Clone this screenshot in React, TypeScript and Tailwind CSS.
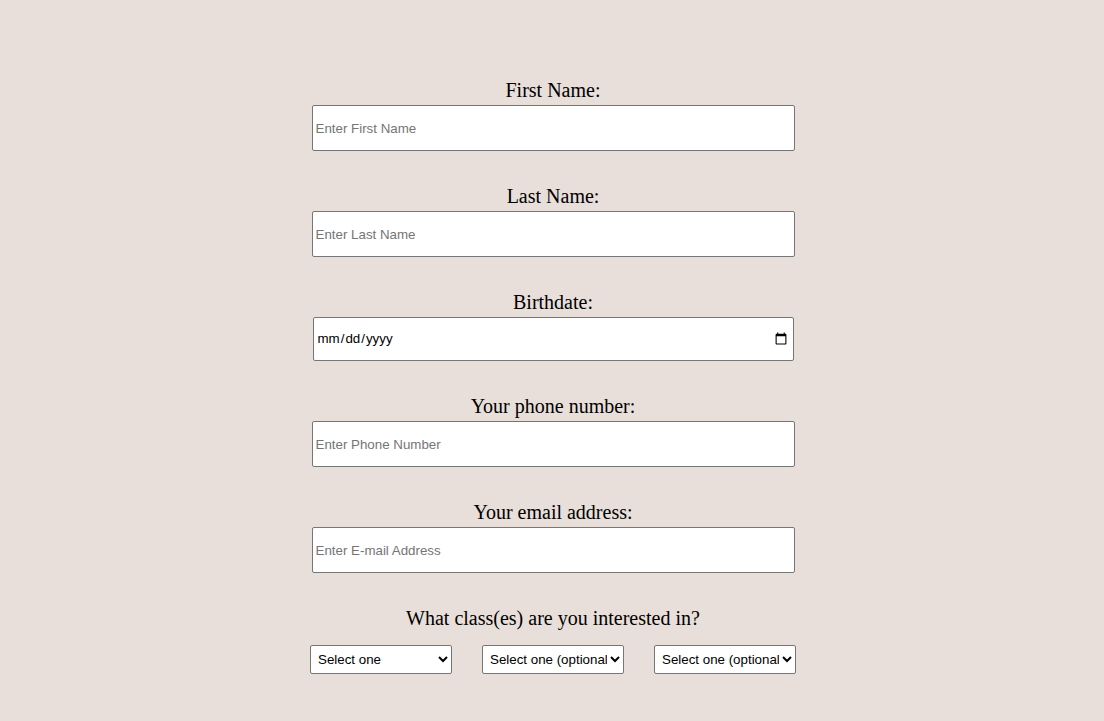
import React from "react";

const serif = { fontFamily: '"Liberation Serif", "Times New Roman", serif' };

function Field({ label, placeholder, type = "text" }: { label: string; placeholder?: string; type?: string }) {
  const isDate = type === "date";
  return (
    <div className="flex flex-col items-center">
      <label className="text-[20px] leading-[24px] text-black" style={serif}>
        {label}
      </label>
      <input
        type={type}
        placeholder={placeholder}
        className={
          isDate
            ? "mt-[3px] w-[481px] h-[44px] bg-white border border-[#767676] rounded-[2px] px-[3px] text-[13.33px] text-black font-['Liberation_Sans',Arial,sans-serif]"
            : "mt-[3px] w-[483px] h-[46px] bg-white border border-[#767676] rounded-[2px] px-[3px] text-[13.33px] text-black placeholder:text-[#757575] font-['Liberation_Sans',Arial,sans-serif]"
        }
      />
    </div>
  );
}

export default function App() {
  return (
    <div className="min-h-[721px] w-full bg-[#e8dfda] pt-[78px] pl-[2px] flex flex-col items-center">
      <div className="flex flex-col items-center gap-[33px]">
        <Field label="First Name:" placeholder="Enter First Name" />
        <Field label="Last Name:" placeholder="Enter Last Name" />
        <Field label="Birthdate:" type="date" />
        <Field label="Your phone number:" placeholder="Enter Phone Number" />
        <Field label="Your email address:" placeholder="Enter E-mail Address" />
        <div className="flex flex-col items-center">
          <label className="text-[20px] leading-[24px] text-black" style={serif}>
            What class(es) are you interested in?
          </label>
          <div className="mt-[15px] flex gap-[30px]">
            {["Select one", "Select one (optional)", "Select one (optional)"].map((t, i) => (
              <select
                key={i}
                defaultValue=""
                className="w-[142px] h-[29px] bg-white border border-[#767676] rounded-[2px] pl-[3px] text-[13.33px] text-black font-['Liberation_Sans',Arial,sans-serif]"
              >
                <option value="">{t}</option>
              </select>
            ))}
          </div>
        </div>
      </div>
    </div>
  );
}
